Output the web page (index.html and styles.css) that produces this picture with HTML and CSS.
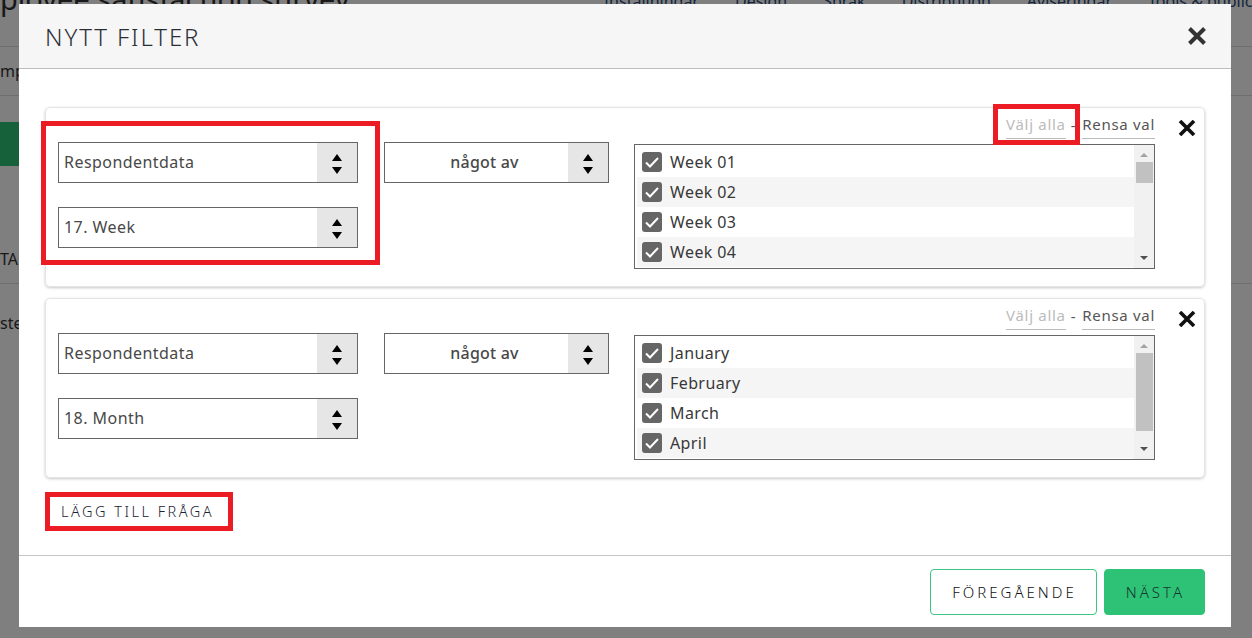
FILE: index.html
```html
<!DOCTYPE html>
<html lang="sv">

<head>
    <meta charset="UTF-8" />
    <meta name="viewport" content="width=device-width, initial-scale=1.0" />
    <title>Nytt filter</title>
    <link rel="stylesheet" href="styles.css">
</head>

<body>
    <!-- page behind the dialog -->
    <div class="page">
        <div class="page-head">
            <h1 class="page-title">ployee satisfaction survey</h1>
            <nav class="page-nav">
                <span>Inställningar</span>
                <span>Design</span>
                <span>Språk</span>
                <span>Distribution</span>
                <span>Aviseringar</span>
                <span>Tools &amp; publicering</span>
            </nav>
        </div>
        <div class="page-sub">mployee satisfaction survey</div>
        <div class="page-main">
            <div class="page-btn"></div>
            <div class="page-tabs">TA</div>
            <p class="page-text">ste</p>
        </div>
    </div>

    <div class="backdrop"></div>

    <div class="modal">
        <div class="modal-head">
            <h2 class="modal-title">NYTT FILTER</h2>
            <button class="modal-close" aria-label="Stäng">
                <svg viewBox="0 0 20 20" width="20" height="20"><path d="M2.5 2.5L17.5 17.5M17.5 2.5L2.5 17.5" stroke="#333" stroke-width="4" fill="none"/></svg>
            </button>
        </div>

        <div class="modal-body">
            <!-- filter 1 -->
            <div class="filter">
                <div class="field-col">
                    <div class="select">
                        <span class="select-text">Respondentdata</span>
                        <span class="select-arrow"><svg viewBox="0 0 10 20" width="10" height="20"><path d="M0 7L5 0L10 7zM0 13L10 13L5 20z" fill="#000"/></svg></span>
                    </div>
                    <div class="select">
                        <span class="select-text">17. Week</span>
                        <span class="select-arrow"><svg viewBox="0 0 10 20" width="10" height="20"><path d="M0 7L5 0L10 7zM0 13L10 13L5 20z" fill="#000"/></svg></span>
                    </div>
                    <div class="mark mark-fields"></div>
                </div>

                <div class="op-col">
                    <div class="select">
                        <span class="select-text op-text">något av</span>
                        <span class="select-arrow"><svg viewBox="0 0 10 20" width="10" height="20"><path d="M0 7L5 0L10 7zM0 13L10 13L5 20z" fill="#000"/></svg></span>
                    </div>
                </div>

                <div class="list-col">
                    <div class="list-actions">
                        <span class="pick pick-all">Välj alla<span class="mark mark-pick"></span></span>
                        <span class="dash">-</span>
                        <span class="pick">Rensa val</span>
                    </div>
                    <div class="list">
                        <div class="list-items">
                            <div class="row"><span class="box"><svg viewBox="0 0 20 20" width="20" height="20"><path d="M4 10.5l4 4L16 6" stroke="#fff" stroke-width="2" fill="none"/></svg></span>Week 01</div>
                            <div class="row"><span class="box"><svg viewBox="0 0 20 20" width="20" height="20"><path d="M4 10.5l4 4L16 6" stroke="#fff" stroke-width="2" fill="none"/></svg></span>Week 02</div>
                            <div class="row"><span class="box"><svg viewBox="0 0 20 20" width="20" height="20"><path d="M4 10.5l4 4L16 6" stroke="#fff" stroke-width="2" fill="none"/></svg></span>Week 03</div>
                            <div class="row"><span class="box"><svg viewBox="0 0 20 20" width="20" height="20"><path d="M4 10.5l4 4L16 6" stroke="#fff" stroke-width="2" fill="none"/></svg></span>Week 04</div>
                        </div>
                        <div class="scrollbar">
                            <span class="sb-up"></span>
                            <div class="sb-track"><div class="sb-thumb thumb-small"></div></div>
                            <span class="sb-down"></span>
                        </div>
                    </div>
                </div>

                <div class="remove-col">
                    <svg viewBox="0 0 18 16" width="18" height="16"><path d="M2 1L16 15M16 1L2 15" stroke="#111" stroke-width="3.6" fill="none"/></svg>
                </div>
            </div>

            <!-- filter 2 -->
            <div class="filter">
                <div class="field-col">
                    <div class="select">
                        <span class="select-text">Respondentdata</span>
                        <span class="select-arrow"><svg viewBox="0 0 10 20" width="10" height="20"><path d="M0 7L5 0L10 7zM0 13L10 13L5 20z" fill="#000"/></svg></span>
                    </div>
                    <div class="select">
                        <span class="select-text">18. Month</span>
                        <span class="select-arrow"><svg viewBox="0 0 10 20" width="10" height="20"><path d="M0 7L5 0L10 7zM0 13L10 13L5 20z" fill="#000"/></svg></span>
                    </div>
                </div>

                <div class="op-col">
                    <div class="select">
                        <span class="select-text op-text">något av</span>
                        <span class="select-arrow"><svg viewBox="0 0 10 20" width="10" height="20"><path d="M0 7L5 0L10 7zM0 13L10 13L5 20z" fill="#000"/></svg></span>
                    </div>
                </div>

                <div class="list-col">
                    <div class="list-actions">
                        <span class="pick pick-all">Välj alla</span>
                        <span class="dash">-</span>
                        <span class="pick">Rensa val</span>
                    </div>
                    <div class="list">
                        <div class="list-items">
                            <div class="row"><span class="box"><svg viewBox="0 0 20 20" width="20" height="20"><path d="M4 10.5l4 4L16 6" stroke="#fff" stroke-width="2" fill="none"/></svg></span>January</div>
                            <div class="row"><span class="box"><svg viewBox="0 0 20 20" width="20" height="20"><path d="M4 10.5l4 4L16 6" stroke="#fff" stroke-width="2" fill="none"/></svg></span>February</div>
                            <div class="row"><span class="box"><svg viewBox="0 0 20 20" width="20" height="20"><path d="M4 10.5l4 4L16 6" stroke="#fff" stroke-width="2" fill="none"/></svg></span>March</div>
                            <div class="row"><span class="box"><svg viewBox="0 0 20 20" width="20" height="20"><path d="M4 10.5l4 4L16 6" stroke="#fff" stroke-width="2" fill="none"/></svg></span>April</div>
                        </div>
                        <div class="scrollbar">
                            <span class="sb-up"></span>
                            <div class="sb-track"><div class="sb-thumb thumb-big"></div></div>
                            <span class="sb-down"></span>
                        </div>
                    </div>
                </div>

                <div class="remove-col">
                    <svg viewBox="0 0 18 16" width="18" height="16"><path d="M2 1L16 15M16 1L2 15" stroke="#111" stroke-width="3.6" fill="none"/></svg>
                </div>
            </div>

            <button class="add-btn">LÄGG TILL FRÅGA<span class="mark mark-add"></span></button>
        </div>

        <div class="modal-foot">
            <button class="btn btn-outline">FÖREGÅENDE</button>
            <button class="btn btn-green">NÄSTA</button>
        </div>
    </div>
</body>

</html>
```

FILE: styles.css
```css
* {
    box-sizing: border-box;
}

body {
    font-family: 'Noto Sans', sans-serif;
    margin: 0;
    background-color: #fff;
    color: #333;
    height: 638px;
    overflow: hidden;
}

/* page behind */
.page-head {
    height: 47px;
    border-bottom: 1px solid #ddd;
    display: flex;
    justify-content: space-between;
}

.page-title {
    margin: -18px 0 0 0;
    font-size: 29px;
    line-height: 34px;
    font-weight: 400;
    color: #333;
}

.page-nav {
    display: flex;
    gap: 36px;
    margin: -9px -40px 0 0;
    font-size: 16px;
    line-height: 20px;
    color: #2a4a7a;
    white-space: nowrap;
}

.page-sub {
    height: 49px;
    border-bottom: 1px solid #ddd;
    line-height: 48px;
    font-size: 16px;
}

.page-main {
    padding-top: 26px;
}

.page-btn {
    width: 120px;
    height: 44px;
    background-color: #2dc275;
}

.page-tabs {
    margin-top: 70px;
    height: 48px;
    line-height: 46px;
    border-bottom: 1px solid #ddd;
    font-size: 16px;
}

.page-text {
    margin: 28px 0 0;
    font-size: 16px;
}

.backdrop {
    position: fixed;
    inset: 0;
    background-color: rgba(0, 0, 0, 0.5);
}

/* dialog */
.modal {
    position: fixed;
    top: 4px;
    left: 19px;
    width: 1212px;
    background-color: #fff;
}

.modal-head {
    height: 65px;
    background-color: #f6f6f6;
    border-bottom: 1px solid #bdbdbd;
    display: flex;
    align-items: center;
    justify-content: space-between;
    padding: 0 24px 0 26px;
}

.modal-title {
    margin: 0;
    font-size: 24px;
    font-weight: 300;
    color: #2b2e35;
    letter-spacing: 1.9px;
}

.modal-close {
    border: none;
    background: none;
    padding: 0;
    display: flex;
    cursor: pointer;
}

.modal-body {
    padding: 38px 26px 27px;
}

.filter {
    position: relative;
    height: 180px;
    border: 1px solid #e4e4e4;
    border-radius: 5px;
    box-shadow: 0 1px 3px rgba(0, 0, 0, 0.22);
    display: flex;
    padding-left: 12px;
    margin-bottom: 11px;
}

.field-col {
    position: relative;
    width: 300px;
    padding-top: 34px;
    display: flex;
    flex-direction: column;
    gap: 24px;
}

.op-col {
    width: 225px;
    margin-left: 26px;
    padding-top: 34px;
}

.select {
    height: 41px;
    border: 1px solid #666;
    display: flex;
    background-color: #fff;
}

.select-text {
    flex: 1;
    padding-left: 5px;
    font-size: 16px;
    line-height: 39px;
    letter-spacing: 0.45px;
    color: #484848;
}

.op-text {
    text-align: center;
    padding-left: 16px;
    font-weight: 500;
    letter-spacing: 0.2px;
}

.select-arrow {
    width: 40px;
    background-color: #e6e6e6;
    display: flex;
    align-items: center;
    justify-content: center;
    padding-top: 2px;
}

.list-col {
    width: 521px;
    margin-left: 25px;
}

.list-actions {
    height: 36px;
    display: flex;
    justify-content: flex-end;
    align-items: flex-end;
    padding-bottom: 5px;
    font-size: 15px;
    line-height: 20px;
    letter-spacing: 0.7px;
}

.pick {
    color: #555;
    border-bottom: 1px solid #bbb;
    padding-bottom: 4px;
}

.pick-all {
    position: relative;
    color: #bbb;
}

.dash {
    color: #555;
    margin: 0 6px 4px 5px;
}

.list {
    height: 125px;
    border: 1px solid #666;
    display: flex;
}

.list-items {
    flex: 1;
    padding: 2px 0 1px 2px;
}

.row {
    height: 30px;
    display: flex;
    align-items: center;
    padding-left: 5px;
    font-size: 16px;
    letter-spacing: 0.4px;
    color: #383838;
}

.row:nth-child(even) {
    background-color: #f5f5f5;
}

.box {
    width: 20px;
    height: 20px;
    border-radius: 3px;
    background-color: #666;
    display: flex;
    margin-right: 8px;
}

.scrollbar {
    width: 20px;
    background-color: #f1f1f1;
    display: flex;
    flex-direction: column;
    align-items: center;
}

.sb-up,
.sb-down {
    width: 0;
    height: 0;
    border-left: 4px solid transparent;
    border-right: 4px solid transparent;
}

.sb-up {
    margin: 8px 0 5px;
    border-bottom: 4px solid #a3a3a3;
}

.sb-down {
    margin: 5px 0 8px;
    border-top: 4px solid #505050;
}

.sb-track {
    flex: 1;
    width: 100%;
    padding: 0 1px 0 2px;
}

.sb-thumb {
    background-color: #c1c1c1;
}

.thumb-small {
    height: 21px;
}

.thumb-big {
    height: 78px;
}

.remove-col {
    flex: 1;
    padding: 11px 0 0 23px;
}

.add-btn {
    position: relative;
    margin-top: 5px;
    height: 34px;
    width: 184px;
    background-color: #fff;
    border: 1px solid #2dc275;
    border-radius: 3px;
    padding: 0 0 0 15px;
    text-align: left;
    font-family: inherit;
    font-size: 14.5px;
    font-weight: 300;
    letter-spacing: 2.5px;
    color: #1c2230;
}

/* red annotation frames */
.mark {
    position: absolute;
    border: 5px solid #ec1c24;
    pointer-events: none;
}

.mark-fields {
    left: -17px;
    top: 13px;
    width: 339px;
    height: 144px;
}

.mark-pick {
    left: -13px;
    right: -14px;
    top: -10px;
    bottom: -7px;
}

.mark-add {
    left: -1px;
    right: -5px;
    top: -3px;
    bottom: -4px;
}

.modal-foot {
    border-top: 1px solid #c6c6c6;
    padding: 13px 26px 12px;
    display: flex;
    justify-content: flex-end;
    gap: 7px;
}

.btn {
    height: 46px;
    padding: 0 19px 0 21px;
    border-radius: 4px;
    font-family: inherit;
    font-size: 15px;
    font-weight: 300;
    letter-spacing: 3px;
    cursor: pointer;
}

.btn-outline {
    background-color: #fff;
    border: 1px solid #3cc682;
    color: #111;
}

.btn-green {
    background-color: #2dc275;
    border: 1px solid #2dc275;
    color: #173631;
}
```
